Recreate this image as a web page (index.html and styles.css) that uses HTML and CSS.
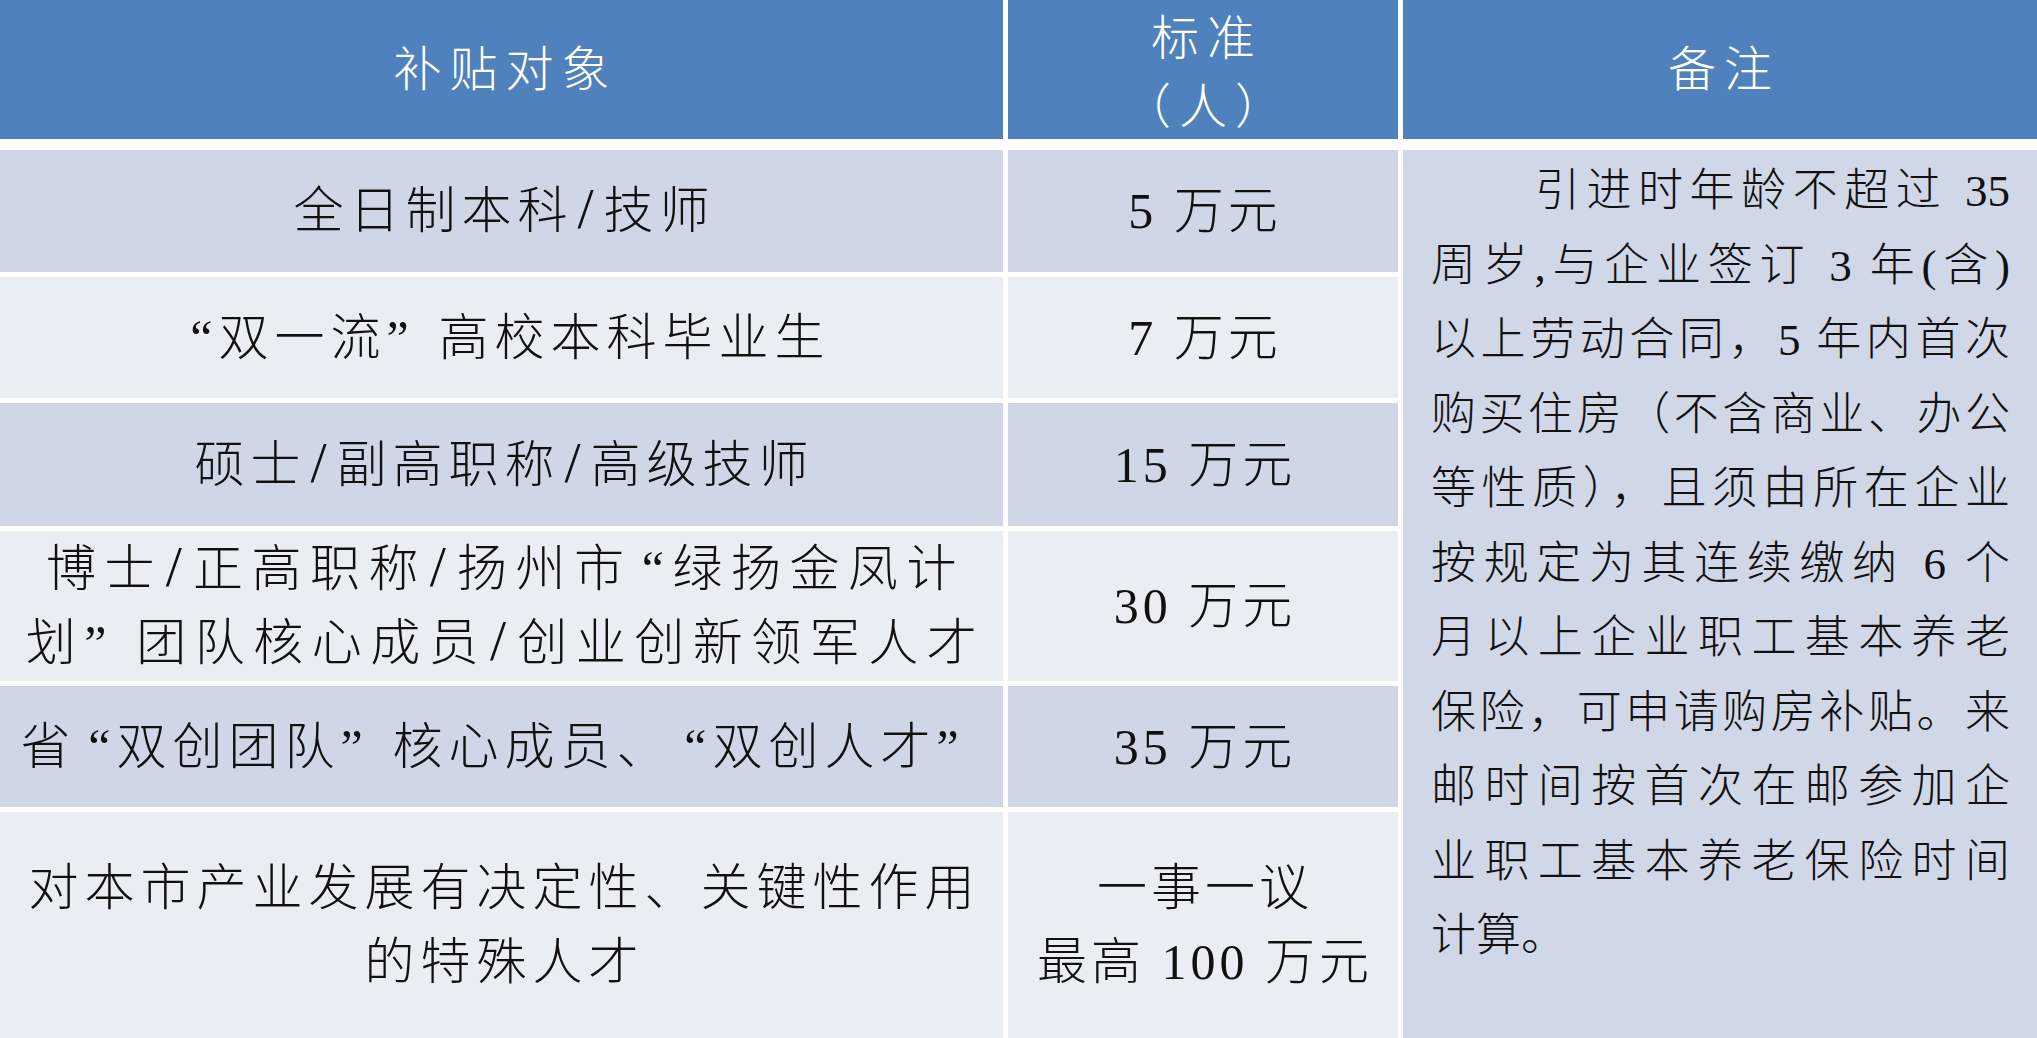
FILE: index.html
```html
<!DOCTYPE html>
<html lang="zh-CN">
<head>
<meta charset="utf-8">
<title>补贴对象</title>
<link rel="stylesheet" href="styles.css">
</head>
<body>
<div class="sheet">
  <div class="head">
    <div class="hc"><span class="tx">补贴对象</span></div>
    <div class="hc two"><span class="tx">标准<br>（人）</span></div>
    <div class="hc"><span class="tx">备注</span></div>
  </div>
  <div class="body">
    <div class="cell dark"><span class="tx">全日制本科<span class="sl">/</span>技师</span></div>
    <div class="cell dark num"><span class="tx">5 万元</span></div>
    <div class="note">
      <span class="ln first">引进时年龄不超过 35</span>
      <span class="ln">周岁,与企业签订 3 年(含)</span>
      <span class="ln">以上劳动合同，5 年内首次</span>
      <span class="ln">购买住房（不含商业、办公</span>
      <span class="ln">等性质），且须由所在企业</span>
      <span class="ln">按规定为其连续缴纳 6 个</span>
      <span class="ln">月以上企业职工基本养老</span>
      <span class="ln">保险，可申请购房补贴。来</span>
      <span class="ln">邮时间按首次在邮参加企</span>
      <span class="ln">业职工基本养老保险时间</span>
      <span class="ln end">计算。</span>
    </div>
    <div class="cell light"><span class="tx"><span class="qo">“</span>双一流<span class="qc">”</span>高校本科毕业生</span></div>
    <div class="cell light num"><span class="tx">7 万元</span></div>
    <div class="cell dark"><span class="tx">硕士<span class="sl">/</span>副高职称<span class="sl">/</span>高级技师</span></div>
    <div class="cell dark num"><span class="tx">15 万元</span></div>
    <div class="cell light wide"><span class="tx">博士<span class="sl">/</span>正高职称<span class="sl">/</span>扬州市<span class="qo">“</span>绿扬金凤计<br>划<span class="qc">”</span>团队核心成员<span class="sl">/</span>创业创新领军人才</span></div>
    <div class="cell light num"><span class="tx">30 万元</span></div>
    <div class="cell dark"><span class="tx">省<span class="qo">“</span>双创团队<span class="qc">”</span>核心成员、<span class="qo">“</span>双创人才<span class="qc">”</span></span></div>
    <div class="cell dark num"><span class="tx">35 万元</span></div>
    <div class="cell light"><span class="tx">对本市产业发展有决定性、关键性作用<br>的特殊人才</span></div>
    <div class="cell light num"><span class="tx">一事一议<br>最高 100 万元</span></div>
  </div>
</div>
</body>
</html>
```

FILE: styles.css
```css
html, body {
  margin: 0;
  padding: 0;
  background: #ffffff;
}

body {
  font-family: "Liberation Serif", "Noto Sans CJK SC", serif;
  color: #111111;
}

.sheet {
  width: 2037px;
  height: 1038px;
  overflow: hidden;
}

.head {
  display: grid;
  grid-template-columns: 1003px 390px 634px;
  grid-template-rows: 139px;
  column-gap: 5px;
  height: 139px;
  margin-bottom: 11px;
}

.hc {
  background: #4f81bd;
  color: #ffffff;
  font-family: "Noto Sans CJK SC", sans-serif;
  font-weight: 300;
  font-size: 48px;
  letter-spacing: 8px;
  padding: 0 0 10px 8px;
  min-height: 0;
  display: flex;
  align-items: center;
  justify-content: center;
  text-align: center;
}

.hc.two {
  line-height: 68px;
  padding-bottom: 4px;
}

.tx {
  display: block;
}

.body {
  display: grid;
  grid-template-columns: 1003px 390px 634px;
  grid-template-rows: 122px 121px 123px 150px 121px 226px;
  gap: 5px;
}

.cell {
  display: flex;
  align-items: center;
  justify-content: center;
  text-align: center;
  font-size: 50px;
  font-weight: 300;
  line-height: 74px;
  letter-spacing: 6px;
  padding-left: 6px;
}

.cell.wide {
  letter-spacing: 8.5px;
  padding-left: 8px;
}

.cell.num {
  letter-spacing: 4px;
  padding-left: 4px;
}

.sl {
  display: inline-block;
  width: 30px;
  text-align: center;
  font-size: 58px;
  line-height: 1;
}

.qo {
  display: inline-block;
  width: 40px;
  text-align: right;
  line-height: 1;
}

.qc {
  display: inline-block;
  width: 52px;
  text-align: left;
  line-height: 1;
}

.dark {
  background: #cfd7e6;
}

.light {
  background: #e9edf4;
}

.note {
  grid-column: 3;
  grid-row: 1 / 7;
  background: #d0d8e8;
  padding: 4px 27px 0 28px;
  font-size: 45px;
  font-weight: 300;
  line-height: 74.5px;
}

.ln {
  display: block;
  text-align: justify;
  text-align-last: justify;
}

.ln.first {
  padding-left: 104px;
}

.ln.end {
  text-align-last: left;
}
```
